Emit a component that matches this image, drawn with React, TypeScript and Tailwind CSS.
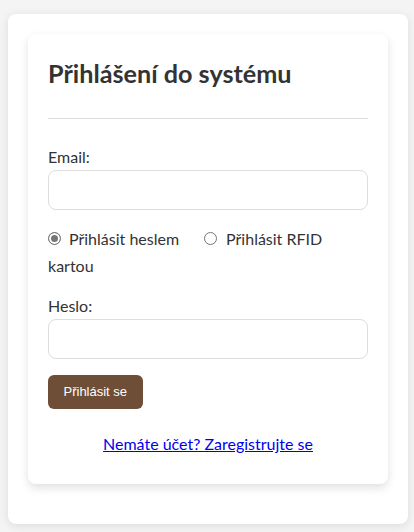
function Radio({ checked }: { checked?: boolean }) {
  return (
    <span
      className={`inline-block h-[13px] w-[13px] rounded-full border border-[#767676] align-baseline ${
        checked ? 'bg-[#767676] shadow-[inset_0_0_0_2px_white]' : 'bg-white'
      }`}
    />
  );
}

export default function App() {
  return (
    <div className="min-h-[532px] bg-[#f4f4f4] pt-[14px] font-['Lato',sans-serif] text-[#333]">
      <div className="ml-2 w-[400px] rounded-lg bg-white px-5 pt-5 pb-10 shadow-[0_2px_10px_rgba(0,0,0,0.1)]">
        <div className="rounded-lg bg-white px-5 pt-6 pb-7 shadow-[0_4px_10px_rgba(0,0,0,0.12)]">
          <h2 className="border-b border-[#ddd] pb-[30px] text-[25.2px] leading-[30px] font-bold">
            Přihlášení do systému
          </h2>

          <label className="mt-[26px] mb-px block text-base leading-6">Email:</label>
          <input type="email" className="block h-10 w-full rounded-lg border border-[#ddd] bg-white px-3 outline-none" />

          <div className="mt-[15px] text-base leading-[27px]">
            <Radio checked />
            <span className="ml-2">Přihlásit heslem</span>
            <span className="ml-[25px]">
              <Radio />
            </span>
            <span className="ml-[9px]">Přihlásit RFID</span> kartou
          </div>

          <label className="mt-[15px] mb-px block text-base leading-6">Heslo:</label>
          <input type="password" className="block h-10 w-full rounded-lg border border-[#ddd] bg-white px-3 outline-none" />

          <button className="mt-4 h-[34px] rounded-md bg-[#6f4e37] px-[15.5px] font-['Liberation_Sans',Arial,sans-serif] text-[13px] text-white">
            Přihlásit se
          </button>

          <div className="mt-[23px] text-center text-base leading-6">
            <a href="#" className="text-[#0000ee] underline">
              Nemáte účet? Zaregistrujte se
            </a>
          </div>
        </div>
      </div>
    </div>
  );
}
